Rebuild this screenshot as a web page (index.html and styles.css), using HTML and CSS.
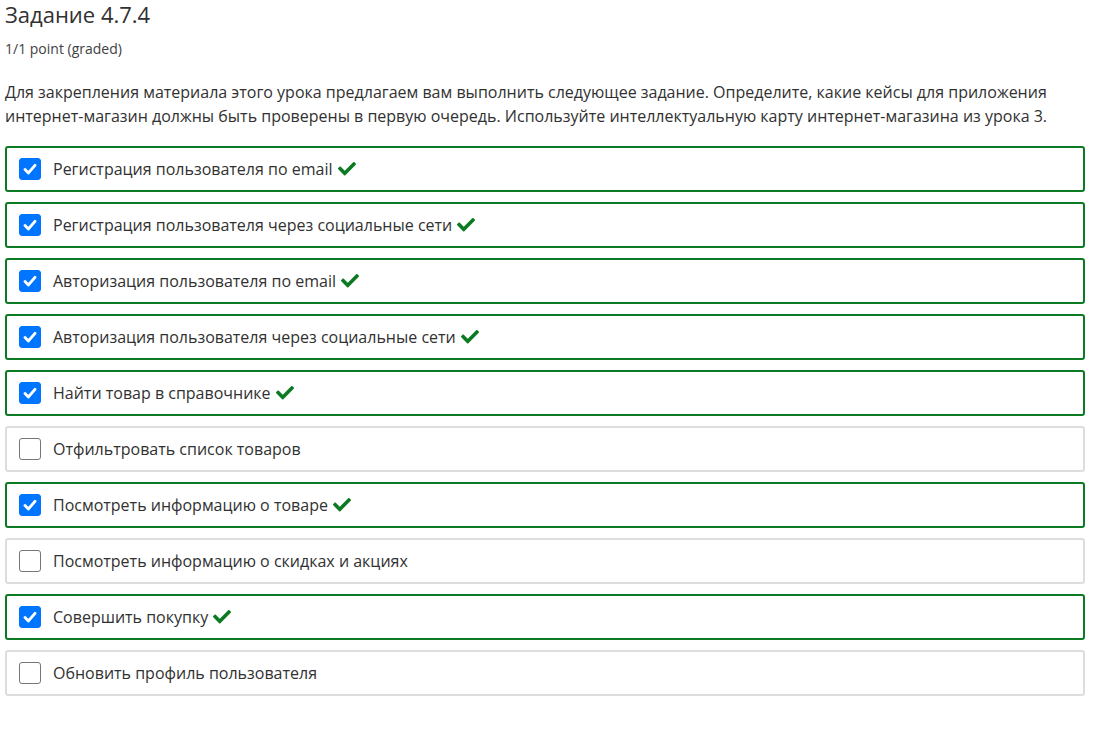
FILE: index.html
```html
<!DOCTYPE html>
<html lang="ru">
<head>
<meta charset="utf-8">
<link rel="stylesheet" href="styles.css">
</head>
<body>
<div class="problem">
  <h2 class="title">Задание 4.7.4</h2>
  <div class="points">1/1 point (graded)</div>
  <p class="prompt">Для закрепления материала этого урока предлагаем вам выполнить следующее задание. Определите, какие кейсы для приложения интернет-магазин должны быть проверены в первую очередь. Используйте интеллектуальную карту интернет-магазина из урока 3.</p>
  <div class="choices">
    <label class="choice correct"><span class="box checked"><svg viewBox="0 0 22 22"><path d="M5.5 11.5l3.8 3.8 7.2-8.3" /></svg></span><span class="text">Регистрация пользователя по email</span><svg class="ok" viewBox="0 64 512 384"><path d="M173.898 439.404l-166.4-166.4c-9.997-9.997-9.997-26.206 0-36.204l36.203-36.204c9.997-9.998 26.207-9.998 36.204 0L192 312.69 432.095 72.596c9.997-9.997 26.207-9.997 36.204 0l36.203 36.204c9.997 9.997 9.997 26.206 0 36.204l-294.4 294.401c-9.998 9.997-26.207 9.997-36.204-.001z"/></svg></label>
    <label class="choice correct"><span class="box checked"><svg viewBox="0 0 22 22"><path d="M5.5 11.5l3.8 3.8 7.2-8.3" /></svg></span><span class="text">Регистрация пользователя через социальные сети</span><svg class="ok" viewBox="0 64 512 384"><path d="M173.898 439.404l-166.4-166.4c-9.997-9.997-9.997-26.206 0-36.204l36.203-36.204c9.997-9.998 26.207-9.998 36.204 0L192 312.69 432.095 72.596c9.997-9.997 26.207-9.997 36.204 0l36.203 36.204c9.997 9.997 9.997 26.206 0 36.204l-294.4 294.401c-9.998 9.997-26.207 9.997-36.204-.001z"/></svg></label>
    <label class="choice correct"><span class="box checked"><svg viewBox="0 0 22 22"><path d="M5.5 11.5l3.8 3.8 7.2-8.3" /></svg></span><span class="text">Авторизация пользователя по email</span><svg class="ok" viewBox="0 64 512 384"><path d="M173.898 439.404l-166.4-166.4c-9.997-9.997-9.997-26.206 0-36.204l36.203-36.204c9.997-9.998 26.207-9.998 36.204 0L192 312.69 432.095 72.596c9.997-9.997 26.207-9.997 36.204 0l36.203 36.204c9.997 9.997 9.997 26.206 0 36.204l-294.4 294.401c-9.998 9.997-26.207 9.997-36.204-.001z"/></svg></label>
    <label class="choice correct"><span class="box checked"><svg viewBox="0 0 22 22"><path d="M5.5 11.5l3.8 3.8 7.2-8.3" /></svg></span><span class="text">Авторизация пользователя через социальные сети</span><svg class="ok" viewBox="0 64 512 384"><path d="M173.898 439.404l-166.4-166.4c-9.997-9.997-9.997-26.206 0-36.204l36.203-36.204c9.997-9.998 26.207-9.998 36.204 0L192 312.69 432.095 72.596c9.997-9.997 26.207-9.997 36.204 0l36.203 36.204c9.997 9.997 9.997 26.206 0 36.204l-294.4 294.401c-9.998 9.997-26.207 9.997-36.204-.001z"/></svg></label>
    <label class="choice correct"><span class="box checked"><svg viewBox="0 0 22 22"><path d="M5.5 11.5l3.8 3.8 7.2-8.3" /></svg></span><span class="text">Найти товар в справочнике</span><svg class="ok" viewBox="0 64 512 384"><path d="M173.898 439.404l-166.4-166.4c-9.997-9.997-9.997-26.206 0-36.204l36.203-36.204c9.997-9.998 26.207-9.998 36.204 0L192 312.69 432.095 72.596c9.997-9.997 26.207-9.997 36.204 0l36.203 36.204c9.997 9.997 9.997 26.206 0 36.204l-294.4 294.401c-9.998 9.997-26.207 9.997-36.204-.001z"/></svg></label>
    <label class="choice"><span class="box"></span><span class="text">Отфильтровать список товаров</span></label>
    <label class="choice correct"><span class="box checked"><svg viewBox="0 0 22 22"><path d="M5.5 11.5l3.8 3.8 7.2-8.3" /></svg></span><span class="text">Посмотреть информацию о товаре</span><svg class="ok" viewBox="0 64 512 384"><path d="M173.898 439.404l-166.4-166.4c-9.997-9.997-9.997-26.206 0-36.204l36.203-36.204c9.997-9.998 26.207-9.998 36.204 0L192 312.69 432.095 72.596c9.997-9.997 26.207-9.997 36.204 0l36.203 36.204c9.997 9.997 9.997 26.206 0 36.204l-294.4 294.401c-9.998 9.997-26.207 9.997-36.204-.001z"/></svg></label>
    <label class="choice"><span class="box"></span><span class="text">Посмотреть информацию о скидках и акциях</span></label>
    <label class="choice correct"><span class="box checked"><svg viewBox="0 0 22 22"><path d="M5.5 11.5l3.8 3.8 7.2-8.3" /></svg></span><span class="text">Совершить покупку</span><svg class="ok" viewBox="0 64 512 384"><path d="M173.898 439.404l-166.4-166.4c-9.997-9.997-9.997-26.206 0-36.204l36.203-36.204c9.997-9.998 26.207-9.998 36.204 0L192 312.69 432.095 72.596c9.997-9.997 26.207-9.997 36.204 0l36.203 36.204c9.997 9.997 9.997 26.206 0 36.204l-294.4 294.401c-9.998 9.997-26.207 9.997-36.204-.001z"/></svg></label>
    <label class="choice"><span class="box"></span><span class="text">Обновить профиль пользователя</span></label>
  </div>
</div>
</body>
</html>
```

FILE: styles.css
```css
html, body {
  margin: 0;
  padding: 0;
  background: #fff;
}
body {
  font-family: "Open Sans", "Noto Sans", sans-serif;
  color: #313131;
}
.problem {
  width: 1080px;
  padding-left: 5px;
}
.title {
  margin: 0;
  font-size: 22px;
  font-weight: 400;
  line-height: 28px;
  color: #313131;
}
.points {
  margin-top: 12px;
  font-size: 14px;
  line-height: 18px;
  color: #414141;
}
.prompt {
  margin: 22px 0 0;
  font-size: 16px;
  line-height: 24px;
}
.choices {
  margin-top: 18px;
  display: flex;
  flex-direction: column;
  gap: 10px;
}
.choice {
  display: flex;
  align-items: center;
  height: 42px;
  padding: 0 12px;
  border: 2px solid #dddddd;
  border-radius: 3px;
  font-size: 16px;
}
.choice.correct {
  border-color: #0b7a22;
}
.box {
  width: 22px;
  height: 22px;
  box-sizing: border-box;
  border: 1px solid #767676;
  border-radius: 3px;
  background: #fff;
  flex: none;
  display: flex;
}
.box.checked {
  background: #0075ff;
  border-color: #0075ff;
}
.box svg {
  width: 20px;
  height: 20px;
}
.box svg path {
  fill: none;
  stroke: #fff;
  stroke-width: 3.2;
  stroke-linecap: round;
  stroke-linejoin: round;
}
.text {
  margin-left: 12px;
}
.ok {
  width: 18px;
  height: 13.5px;
  margin-left: 5px;
  fill: #0b7a22;
}
```
